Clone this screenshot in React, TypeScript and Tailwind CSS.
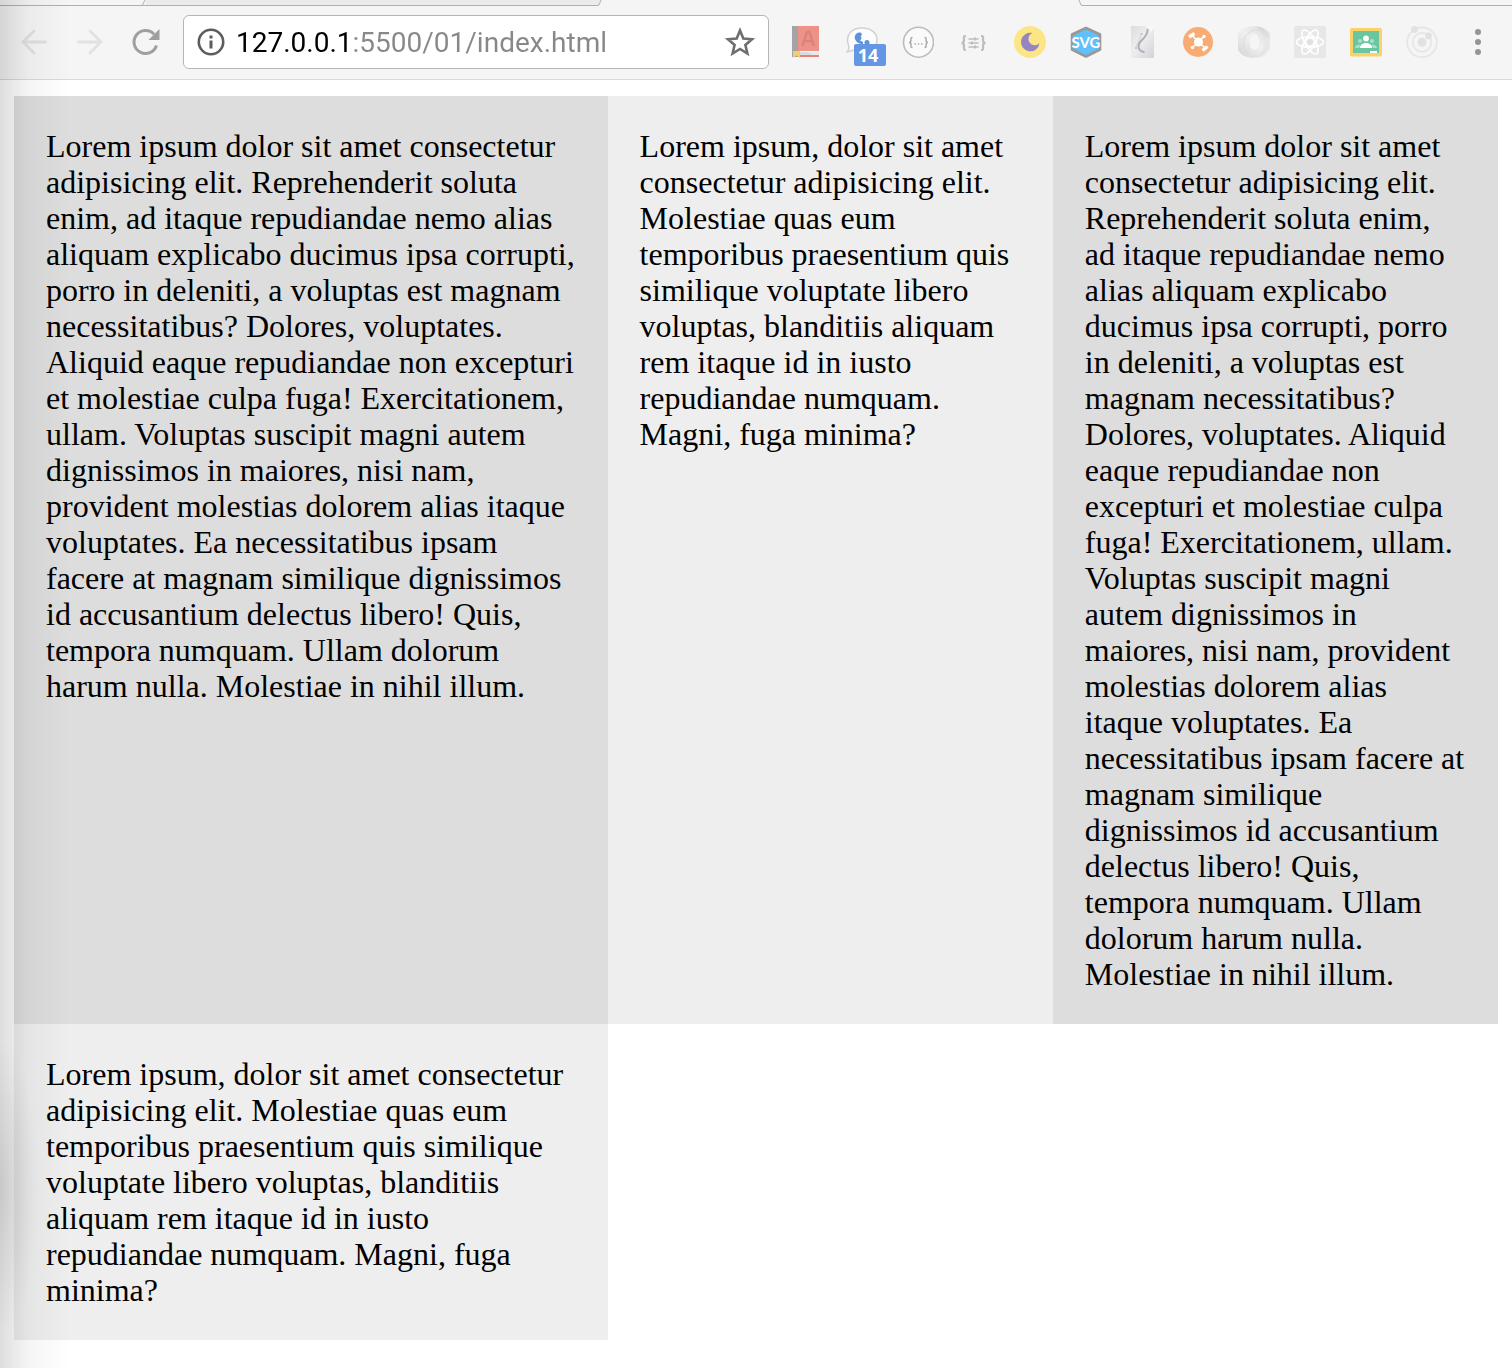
import React from "react";

const LONG =
  "Lorem ipsum dolor sit amet consectetur adipisicing elit. Reprehenderit soluta enim, ad itaque repudiandae nemo alias aliquam explicabo ducimus ipsa corrupti, porro in deleniti, a voluptas est magnam necessitatibus? Dolores, voluptates. Aliquid eaque repudiandae non excepturi et molestiae culpa fuga! Exercitationem, ullam. Voluptas suscipit magni autem dignissimos in maiores, nisi nam, provident molestias dolorem alias itaque voluptates. Ea necessitatibus ipsam facere at magnam similique dignissimos id accusantium delectus libero! Quis, tempora numquam. Ullam dolorum harum nulla. Molestiae in nihil illum.";
const SHORT =
  "Lorem ipsum, dolor sit amet consectetur adipisicing elit. Molestiae quas eum temporibus praesentium quis similique voluptate libero voluptas, blanditiis aliquam rem itaque id in iusto repudiandae numquam. Magni, fuga minima?";

function Svg({ children }: { children: React.ReactNode }) {
  return (
    <svg className="block size-8" viewBox="0 0 32 32" fill="none" aria-hidden="true">
      {children}
    </svg>
  );
}

function BackIcon() {
  return (
    <Svg>
      <path d="M27.500 16H5M16 5L5 16L16 27" stroke="#e0e0e0" strokeWidth="2.800" strokeLinecap="round" />
    </Svg>
  );
}

function ForwardIcon() {
  return (
    <Svg>
      <path d="M4.500 16H27M16 5L27 16L16 27" stroke="#e2e2e2" strokeWidth="2.800" strokeLinecap="round" />
    </Svg>
  );
}

function ReloadIcon() {
  return (
    <Svg>
      <path d="M26.500 19.500A11.500 11.500 0 1 1 24 8.200" stroke="#9f9f9f" strokeWidth="3" />
      <path d="M29.500 3V14H18.500Z" fill="#9f9f9f" />
    </Svg>
  );
}

function DictionaryIcon() {
  return (
    <Svg>
      <path d="M2 0H8V31H2Z" fill="#a2a4a7" />
      <path d="M8 0H29V25H8Z" fill="#ee9288" />
      <path d="M8 26H29V29H8Z" fill="#e8e8ea" />
      <path d="M8 26H18L22 29H8Z" fill="#d3dde2" />
      <path d="M8 29H29V31H8Z" fill="#ea8177" />
      <path d="M12.500 20L17 6H19.500L24 20M14.500 15H22" stroke="#db827b" strokeWidth="2.400" />
      <path d="M3 25H10V32L6.500 29.500L3 32Z" fill="#f2cf6b" />
    </Svg>
  );
}

function ChatIcon() {
  return (
    <Svg>
      <path
        d="M1 26C3 24 3.500 22 2.500 19C-1 10 5 2 16 2C25 2 31 7 31 14C31 21 25 24 16 24H8Z"
        fill="#fdfdfd"
        stroke="#d2d2d2"
        strokeWidth="1.600"
      />
      <path d="M13 6.500C10 7 8 10 9 13C10 16 13 18 17 18V16L14 14.500C16 13 16 11 14.500 10C17 9 16 6 13 6.500Z" fill="#5b94dc" />
      <circle cx="21" cy="16.500" r="2.500" fill="#5b94dc" />
    </Svg>
  );
}

function JsonIcon() {
  return (
    <Svg>
      <circle cx="16.500" cy="16.200" r="15" fill="#fafafa" stroke="#bcbcbc" strokeWidth="1.600" />
      <path
        d="M10.500 11.500C8.500 11.500 9 12.500 9 14C9 15.500 8.700 16.500 7 16.500C8.700 16.500 9 17.500 9 19C9 20.500 8.500 21.500 10.500 21.500M22.500 11.500C24.500 11.500 24 12.500 24 14C24 15.500 24.300 16.500 26 16.500C24.300 16.500 24 17.500 24 19C24 20.500 24.500 21.500 22.500 21.500"
        stroke="#adadad"
        strokeWidth="1.500"
      />
      <path d="M12.500 18H14M15.800 18H17.300M19 18H20.500" stroke="#adadad" strokeWidth="1.500" />
    </Svg>
  );
}

function BracesIcon() {
  return (
    <Svg>
      <path
        d="M8 10C5 10 6 12 6 14C6 16 5.500 17 3.500 17C5.500 17 6 18 6 20C6 22 5 24 8 24M23 10C26 10 25 12 25 14C25 16 25.500 17 27.500 17C25.500 17 25 18 25 20C25 22 26 24 23 24"
        stroke="#bdbdbd"
        strokeWidth="2.200"
      />
      <path d="M10.500 13H20.500M10.500 17H20.500M10.500 21H20.500" stroke="#bdbdbd" strokeWidth="1.600" />
      <path d="M17 11.500V14.500M14 15.500V18.500M17 19.500V22.500" stroke="#bdbdbd" strokeWidth="1.800" />
    </Svg>
  );
}

function MoonIcon() {
  return (
    <Svg>
      <circle cx="16" cy="16" r="16" fill="#fce584" />
      <path d="M18.500 7A9.300 9.300 0 1 0 25.500 17A6.300 6.300 0 1 1 18.500 7Z" fill="#9585c0" />
    </Svg>
  );
}

function SvgBadgeIcon() {
  return (
    <Svg>
      <path d="M16 2L30 8.500V23.500L16 30.500L2 23.500V8.500Z" fill="#5fc0fb" stroke="#9a9896" strokeWidth="2.600" strokeLinejoin="round" />
      <text x="16" y="21.500" textAnchor="middle" fontSize="15" fontWeight="700" fill="#ffffff" fontFamily="Lato, sans-serif">
        SVG
      </text>
    </Svg>
  );
}

function ScriptIcon() {
  return (
    <Svg>
      <defs>
        <linearGradient id="sheet" x1="0" y1="0" x2="1" y2="1">
          <stop offset="0" stopColor="#dcdcde" />
          <stop offset="0.450" stopColor="#eeedef" />
          <stop offset="1" stopColor="#d3d2d5" />
        </linearGradient>
      </defs>
      <path d="M5 0H20L25 3L28 3V32H5Z" fill="url(#sheet)" />
      <path d="M19.500 0L25 6L28 2V0Z" fill="#f8f8f8" />
      <path d="M21.500 3C22.500 9 17 12.500 14.500 15.500C11 19.500 12 25.500 18.500 26" stroke="#b0aeb2" strokeWidth="2" />
      <path d="M15.500 8L10 21" stroke="#cfcedc" strokeWidth="0.900" />
      <circle cx="15.500" cy="8" r="1" fill="#bcbacc" />
      <circle cx="10" cy="22" r="1" fill="#bcbacc" />
    </Svg>
  );
}

function DroneIcon() {
  return (
    <Svg>
      <circle cx="16" cy="16" r="15" fill="#f9ab76" />
      <circle cx="16.500" cy="16" r="4.500" fill="#fff" />
      <path d="M9.500 9L23 22M22 10.500L10.500 21.500" stroke="#fff" strokeWidth="1.600" />
      <path d="M7 11L12.500 7.500M20.500 24.500L25.500 20.500" stroke="#fff" strokeWidth="3.400" />
      <circle cx="22" cy="10.500" r="1.700" fill="#fff" />
      <circle cx="10.500" cy="21.500" r="1.700" fill="#fff" />
    </Svg>
  );
}

function SwirlIcon() {
  return (
    <Svg>
      <defs>
        <linearGradient id="swirlA" x1="1" y1="0" x2="0" y2="1">
          <stop offset="0" stopColor="#dadada" />
          <stop offset="0.500" stopColor="#f0f0f0" />
          <stop offset="1" stopColor="#d2d2d2" />
        </linearGradient>
        <linearGradient id="swirlB" x1="0" y1="0" x2="0" y2="1">
          <stop offset="0" stopColor="#d4d4d4" />
          <stop offset="0.500" stopColor="#e9e9e9" />
          <stop offset="1" stopColor="#e2e2e2" />
        </linearGradient>
      </defs>
      <path
        fillRule="evenodd"
        d="M16 0.500A15.700 15.700 0 1 0 16 31.500A15.700 15.700 0 1 0 16 0.500ZM16.500 8C19.500 8 21 11.500 21 16C21 20.500 19.500 24 16.500 24C13.500 24 11.500 20.500 11.500 16C11.500 11.500 13.500 8 16.500 8Z"
        fill="url(#swirlA)"
      />
      <path
        d="M18 0.500C26 1 32 8 32 16C32 25 25 31.500 16 31.500C22 30 26 24 26 16C26 9 23 4 18 0.500Z"
        fill="url(#swirlB)"
      />
      <path d="M22 5C17 3 10 5 7 11C4 18 7 27 14 31.500" stroke="#dcdcdc" strokeWidth="1" />
    </Svg>
  );
}

function ReactIcon() {
  return (
    <Svg>
      <rect width="32" height="32" rx="1.500" fill="#e7e7e7" />
      <g stroke="#fff" strokeWidth="1.600">
        <ellipse cx="16" cy="16" rx="13.500" ry="5.200" />
        <ellipse cx="16" cy="16" rx="13.500" ry="5.200" transform="rotate(60 16 16)" />
        <ellipse cx="16" cy="16" rx="13.500" ry="5.200" transform="rotate(120 16 16)" />
        <path d="M13.500 12H18.500L21 16L18.500 20H13.500L11 16Z" />
      </g>
      <circle cx="16" cy="16" r="2.500" fill="#e0e0e0" />
    </Svg>
  );
}

function ClassroomIcon() {
  return (
    <Svg>
      <rect y="2" width="32" height="28.500" rx="2" fill="#fad268" />
      <path d="M3 5H29V27H3Z" fill="#68c6a0" />
      <circle cx="16" cy="12.500" r="2.900" fill="#fff" />
      <path d="M9.800 22C10 18.500 13 17 16 17C19 17 22 18.500 22.200 22Z" fill="#fff" />
      <g fill="#abdfca">
        <circle cx="10" cy="15" r="2" />
        <circle cx="22" cy="15" r="2" />
        <path d="M5 22C5 19.500 7.500 18.500 10.500 18.500L9 22ZM27 22C27 19.500 24.500 18.500 21.500 18.500L23 22Z" />
      </g>
      <path d="M20 25H27V27H20Z" fill="#fff" />
    </Svg>
  );
}

function OrbitIcon() {
  return (
    <Svg>
      <g stroke="#e6e6e6" strokeWidth="1.800">
        <circle cx="16" cy="16.300" r="14.800" />
        <circle cx="16" cy="16.300" r="9.300" />
      </g>
      <g fill="#e1e1e1">
        <circle cx="16" cy="16.300" r="4.500" />
        <circle cx="8.500" cy="3.500" r="3.400" />
        <circle cx="22.500" cy="10" r="3.400" />
      </g>
    </Svg>
  );
}

const extensions = [
  { name: "Dictionary", Icon: DictionaryIcon },
  { name: "Chat", Icon: ChatIcon, badge: "14" },
  { name: "JSON viewer", Icon: JsonIcon },
  { name: "Formatter", Icon: BracesIcon },
  { name: "Night mode", Icon: MoonIcon },
  { name: "Vector export", Icon: SvgBadgeIcon },
  { name: "Scripts", Icon: ScriptIcon },
  { name: "Hub", Icon: DroneIcon },
  { name: "Swirl", Icon: SwirlIcon },
  { name: "React tools", Icon: ReactIcon },
  { name: "Classroom", Icon: ClassroomIcon },
  { name: "Orbit", Icon: OrbitIcon },
];

function TabStrip() {
  return (
    <div className="flex h-[6px] bg-[#f5f5f5]">
      <div className="w-[142px] border-b border-[#b0b0b0]" />
      <svg className="h-[6px] w-1" viewBox="0 0 4 6" fill="none" aria-hidden="true">
        <path d="M0 5.500H4" stroke="#b0b0b0" />
        <path d="M0.500 5L3 0" stroke="#b0b0b0" />
      </svg>
      <div className="w-[452px] border-b border-[#b0b0b0] bg-[#ebebeb]" />
      <svg className="h-[6px] w-1" viewBox="0 0 4 6" fill="none" aria-hidden="true">
        <path d="M0 0H3L1 5H0Z" fill="#ebebeb" />
        <path d="M0 5.500L1 5L3 0" stroke="#b0b0b0" />
      </svg>
      <div className="w-[476px]" />
      <svg className="h-[6px] w-1" viewBox="0 0 4 6" fill="none" aria-hidden="true">
        <path d="M1 0L3 5L4 5.500" stroke="#b0b0b0" />
      </svg>
      <div className="flex-1 border-b border-[#b0b0b0]" />
    </div>
  );
}

function Toolbar() {
  return (
    <div className="flex h-[74px] items-center border-b border-[#d9d9d9] bg-[#f5f5f5] pr-[18px] pb-[2px] pl-[18px]">
      <div className="flex gap-6">
        <button type="button" aria-label="Back"><BackIcon /></button>
        <button type="button" aria-label="Forward"><ForwardIcon /></button>
        <button type="button" aria-label="Reload"><ReloadIcon /></button>
      </div>
      <div className="ml-[21px] flex h-[54px] min-w-0 flex-1 items-center rounded-md border border-[#b5b5b5] bg-white px-3">
        <button type="button" aria-label="Site information">
          <svg className="block size-[30px]" viewBox="0 0 30 30" fill="none" aria-hidden="true">
            <circle cx="15" cy="15" r="12.200" stroke="#5c5c5c" strokeWidth="2.600" />
            <path d="M13.500 8.500H16.500V11.500H13.500ZM13.500 13.500H16.500V21.500H13.500Z" fill="#5c5c5c" />
          </svg>
        </button>
        <input
          type="text"
          aria-label="Address"
          defaultValue="127.0.0.1:5500/01/index.html"
          className="ml-[10px] h-10 min-w-0 flex-1 bg-linear-to-r from-black from-[115px] to-[#888888] to-[115px] bg-clip-text pt-[2px] font-[Roboto,sans-serif] text-[28px] text-transparent caret-black outline-none"
        />
        <button type="button" aria-label="Bookmark this page">
          <svg className="block size-8" viewBox="0 0 32 32" fill="none" aria-hidden="true">
            <path
              d="M16 4.500L19.300 12.500L28 13.200L21.400 19L23.400 27.500L16 23L8.600 27.500L10.600 19L4 13.200L12.700 12.500Z"
              stroke="#6e6e6e"
              strokeWidth="2.600"
            />
          </svg>
        </button>
      </div>
      <div className="ml-[21px] flex items-center gap-6">
        {extensions.map(({ name, Icon, badge }) => (
          <button key={name} type="button" aria-label={name} className="relative">
            <Icon />
            {badge && (
              <span className="absolute top-[18px] left-2 flex h-[22px] w-8 items-center justify-center rounded-xs bg-[#6496e3] pr-1 font-['Open_Sans',sans-serif] text-[18px] leading-none font-bold text-white">
                {badge}
              </span>
            )}
          </button>
        ))}
        <button type="button" aria-label="Menu">
          <Svg>
            <g fill="#959595">
              <circle cx="16" cy="6" r="3" />
              <circle cx="16" cy="16" r="3" />
              <circle cx="16" cy="26" r="3" />
            </g>
          </Svg>
        </button>
      </div>
    </div>
  );
}

export default function App() {
  return (
    <div className="relative min-h-screen bg-white">
      <header>
        <TabStrip />
        <Toolbar />
      </header>
      <main className="mx-[14px] mt-4 grid grid-cols-[4fr_3fr_3fr] font-['Liberation_Serif',serif] text-[32px] leading-9 text-black">
        <div className="bg-[#dddddd] p-8">{LONG}</div>
        <div className="bg-[#eeeeee] p-8">{SHORT}</div>
        <div className="bg-[#dddddd] p-8">{LONG}</div>
        <div className="bg-[#eeeeee] p-8">{SHORT}</div>
      </main>
      {/* Soft shadow falling on the window's left edge */}
      <div className="pointer-events-none absolute inset-y-0 left-0 w-[70px] bg-linear-to-r from-black/13 via-black/4 via-40% to-transparent" />
      <div className="pointer-events-none absolute bottom-[30px] left-0 h-[300px] w-10 bg-radial-[at_0%_50%] from-black/10 to-transparent to-70%" />
    </div>
  );
}
